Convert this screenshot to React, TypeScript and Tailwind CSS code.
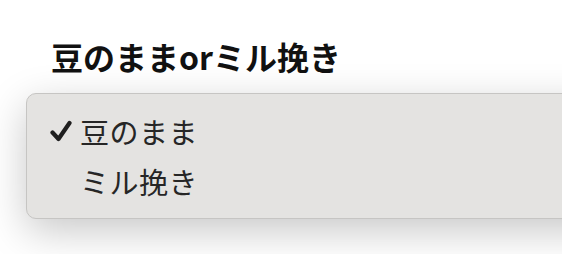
import React from "react";

export default function App() {
  return (
    <div
      className="relative w-[562px] h-[254px] overflow-hidden bg-white"
      style={{ fontFamily: '"Noto Sans CJK JP", "Noto Sans", sans-serif' }}
    >
      <h2 className="pl-[51px] pt-[36px] text-[32px] leading-[40px] font-bold text-[#111111]">
        豆のままorミル挽き
      </h2>
      <p className="pl-[280px] pt-[174px] text-[28px] leading-[38px] font-bold text-[#111111]">
        ※挽き目は中細挽きです
      </p>

      <div className="absolute left-[26px] top-[93px] w-[600px] rounded-[10px] border border-[#c6c5c3] bg-[#e4e3e1] py-[12px] shadow-[0_12px_40px_rgba(0,0,0,0.22)]">
        <div className="flex h-[50px] items-center">
          <div className="flex w-[53px] justify-end pr-[8px]">
            <svg width="22" height="22" viewBox="0 0 22 22" fill="none">
              <path
                d="M2.5 12.5 L8.5 19 L19.5 3"
                stroke="#1f1f1f"
                strokeWidth="4.2"
                strokeLinecap="round"
                strokeLinejoin="round"
              />
            </svg>
          </div>
          <span className="text-[29px] leading-[34px] tracking-[0.5px] text-[#262626]">豆のまま</span>
        </div>
        <div className="flex h-[50px] items-center">
          <div className="w-[53px]" />
          <span className="text-[29px] leading-[34px] tracking-[0.5px] text-[#262626]">ミル挽き</span>
        </div>
      </div>
    </div>
  );
}
